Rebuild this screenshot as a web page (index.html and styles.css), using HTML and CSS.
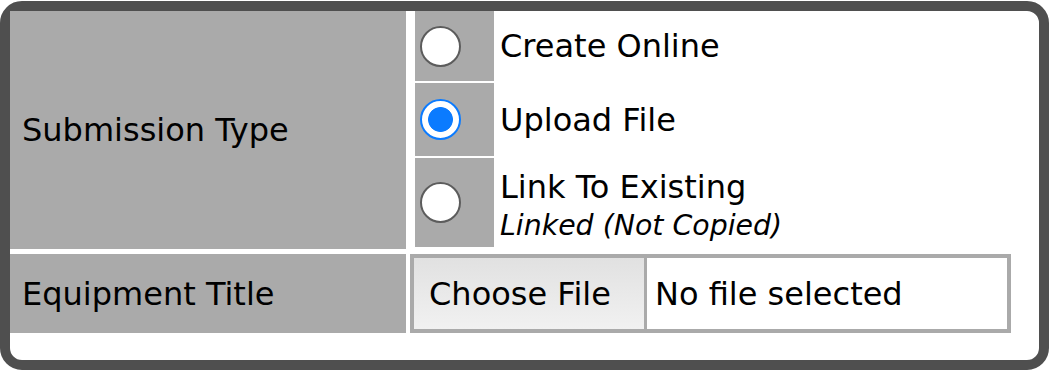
FILE: index.html
```html
<!DOCTYPE html>
<html lang="en">
<head>
  <meta charset="UTF-8" />
  <title>Submission</title>
  <link rel="stylesheet" href="styles.css">
</head>
<body>
  <div class="panel">
    <div class="form-grid">
      <div class="label-cell">Submission Type</div>
      <div class="options">
        <div class="option option-short">
          <div class="radio-cell"><input type="radio" name="subtype" value="online" /></div>
          <div class="option-text">Create Online</div>
        </div>
        <div class="option option-mid">
          <div class="radio-cell"><input type="radio" name="subtype" value="upload" checked /></div>
          <div class="option-text">Upload File</div>
        </div>
        <div class="option option-tall">
          <div class="radio-cell"><input type="radio" name="subtype" value="link" /></div>
          <div class="option-text option-text-top">
            Link To Existing
            <em class="note">Linked (Not Copied)</em>
          </div>
        </div>
      </div>

      <div class="label-cell">Equipment Title</div>
      <div class="file-cell">
        <div class="file-box">
          <span class="file-button">Choose File</span>
          <span class="file-name">No file selected</span>
        </div>
      </div>
    </div>
  </div>
</body>
</html>
```

FILE: styles.css
```css
:root {
  --frame: #4f4f4f;
  --cell: #aaaaaa;
  --blue: #0b7bff;
}

body {
  margin: 0;
  background: #fff;
  font-family: 'DejaVu Sans', Verdana, sans-serif;
  font-size: 32px;
  color: #000;
}

.panel {
  width: 1029px;
  margin: 1px 0 0 0;
  border: 10px solid var(--frame);
  border-radius: 22px;
  background: #fff;
  padding-bottom: 27px;
}

.form-grid {
  display: grid;
  grid-template-columns: 396px 1fr;
  grid-template-rows: 238px 79px;
  column-gap: 4px;
  row-gap: 5px;
}

.label-cell {
  background: var(--cell);
  display: flex;
  align-items: center;
  padding-left: 12px;
}

.options {
  display: flex;
  flex-direction: column;
  gap: 2px;
  padding-left: 5px;
}

.option {
  display: flex;
}

.option-short { height: 70px; }
.option-mid { height: 73px; }
.option-tall { height: 89px; }

.radio-cell {
  width: 79px;
  background: var(--cell);
  display: flex;
  align-items: center;
  padding-left: 5px;
  box-sizing: border-box;
}

.radio-cell input {
  appearance: none;
  margin: 0;
  width: 41px;
  height: 41px;
  border-radius: 50%;
  border: 2px solid #5c5c5c;
  background: #fff;
  box-sizing: border-box;
}

.radio-cell input:checked {
  border-color: var(--blue);
  background: radial-gradient(circle, var(--blue) 0 12px, #fff 12.8px);
}

.option-text {
  display: flex;
  flex-direction: column;
  justify-content: center;
  padding-left: 6px;
}

.option-text-top {
  justify-content: flex-start;
  padding-top: 10px;
}

.note {
  font-size: 28.4px;
  line-height: 1.1;
  margin-top: 4px;
}

.file-cell {
  display: flex;
  align-items: stretch;
}

.file-box {
  width: 601px;
  box-sizing: border-box;
  border: 4px solid var(--cell);
  display: flex;
  background: #fff;
}

.file-button {
  width: 233px;
  box-sizing: border-box;
  border-right: 3px solid var(--cell);
  background: linear-gradient(#e1e1e1, #f1f1f1);
  display: flex;
  align-items: center;
  padding-left: 15px;
}

.file-name {
  display: flex;
  align-items: center;
  padding-left: 8px;
}
```
